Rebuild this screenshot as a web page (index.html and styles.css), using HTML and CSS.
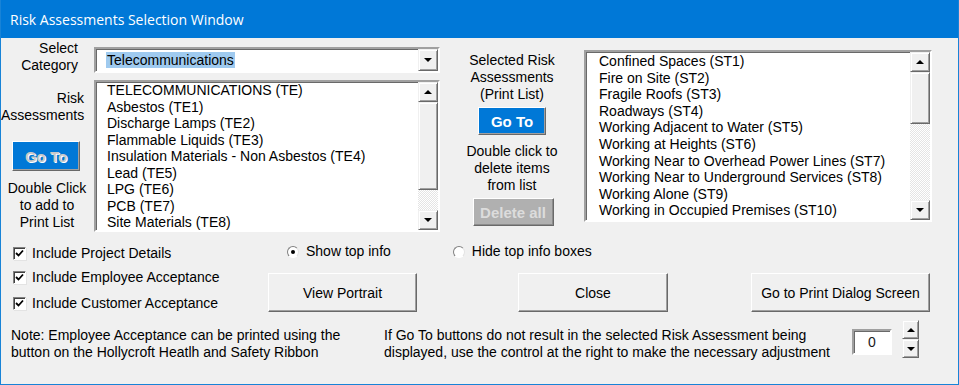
FILE: index.html
```html
<!DOCTYPE html>
<html lang="en">
<head>
  <meta charset="UTF-8">
  <title>Risk Assessments Selection Window</title>
  <link rel="stylesheet" href="styles.css">
</head>
<body>
  <div class="window">
    <div class="titlebar">Risk Assessments Selection Window</div>

    <div class="content">
      <!-- Top area: category picker, lists and middle controls -->
      <div class="top">
        <div class="side">
          <div class="lbl lbl-cat">Select<br>Category</div>
          <div class="lbl lbl-risk">Risk<br>Assessments</div>
          <button class="btn-blue btn-left">Go To</button>
          <div class="hint">Double Click<br>to add to<br>Print List</div>
        </div>

        <div class="picker">
          <div class="combo">
            <span class="combo-text"><span class="sel">Telecommunications</span></span>
            <span class="sbtn"><span class="arrow-down"></span></span>
          </div>
          <div class="listbox list-left">
            <ul class="items">
              <li>TELECOMMUNICATIONS (TE)</li>
              <li>Asbestos (TE1)</li>
              <li>Discharge Lamps (TE2)</li>
              <li>Flammable Liquids (TE3)</li>
              <li>Insulation Materials - Non Asbestos (TE4)</li>
              <li>Lead (TE5)</li>
              <li>LPG (TE6)</li>
              <li>PCB (TE7)</li>
              <li>Site Materials (TE8)</li>
            </ul>
            <div class="scrollbar">
              <span class="sbtn"><span class="arrow-up"></span></span>
              <span class="thumb thumb-left"></span>
              <span class="track"></span>
              <span class="sbtn"><span class="arrow-down"></span></span>
            </div>
          </div>
        </div>

        <div class="middle">
          <div class="mtext">Selected Risk<br>Assessments<br>(Print List)</div>
          <button class="btn-blue btn-mid">Go To</button>
          <div class="mtext mtext-2">Double click to<br>delete items<br>from list</div>
          <button class="btn-grey">Delete all</button>
        </div>

        <div class="listbox list-right">
          <ul class="items">
            <li>Confined Spaces (ST1)</li>
            <li>Fire on Site (ST2)</li>
            <li>Fragile Roofs (ST3)</li>
            <li>Roadways (ST4)</li>
            <li>Working Adjacent to Water (ST5)</li>
            <li>Working at Heights (ST6)</li>
            <li>Working Near to Overhead Power Lines (ST7)</li>
            <li>Working Near to Underground Services (ST8)</li>
            <li>Working Alone (ST9)</li>
            <li>Working in Occupied Premises (ST10)</li>
          </ul>
          <div class="scrollbar">
            <span class="sbtn"><span class="arrow-up"></span></span>
            <span class="thumb thumb-right"></span>
            <span class="track"></span>
            <span class="sbtn"><span class="arrow-down"></span></span>
          </div>
        </div>
      </div>

      <!-- Options and main buttons -->
      <div class="options">
        <div class="checks">
          <label class="check"><span class="box"><svg width="9" height="9" viewBox="0 0 9 9"><path d="M1 4 L3.5 6.5 L8 1.5" fill="none" stroke="#000" stroke-width="1.8"/></svg></span>Include Project Details</label>
          <label class="check check-2"><span class="box"><svg width="9" height="9" viewBox="0 0 9 9"><path d="M1 4 L3.5 6.5 L8 1.5" fill="none" stroke="#000" stroke-width="1.8"/></svg></span>Include Employee Acceptance</label>
          <label class="check check-3"><span class="box"><svg width="9" height="9" viewBox="0 0 9 9"><path d="M1 4 L3.5 6.5 L8 1.5" fill="none" stroke="#000" stroke-width="1.8"/></svg></span>Include Customer Acceptance</label>
        </div>
        <div class="actions">
          <div class="radios">
            <label class="radio radio-show"><span class="dot on"></span>Show top info</label>
            <label class="radio radio-hide"><span class="dot"></span>Hide top info boxes</label>
          </div>
          <div class="buttons">
            <button class="btn btn-portrait">View Portrait</button>
            <button class="btn btn-close">Close</button>
            <button class="btn btn-print">Go to Print Dialog Screen</button>
          </div>
        </div>
      </div>

      <!-- Notes and offset spinner -->
      <div class="notes">
        <p class="note-left">Note: Employee Acceptance can be printed using the<br>button on the Hollycroft Heatlh and Safety Ribbon</p>
        <p class="note-right">If Go To buttons do not result in the selected Risk Assessment being<br>displayed, use the control at the right to make the necessary adjustment</p>
        <div class="spin-box">0</div>
        <div class="spin-btns">
          <span class="sbtn"><span class="arrow-up"></span></span>
          <span class="sbtn"><span class="arrow-down"></span></span>
        </div>
      </div>
    </div>
  </div>
</body>
</html>
```

FILE: styles.css
```css
/* Global */
body {
  margin: 0;
  background-color: #f0f0f0;
  font-family: 'Liberation Sans', Arial, sans-serif;
  font-size: 14px;
  color: #000;
}

.window {
  width: 959px;
  height: 385px;
  box-sizing: border-box;
  border: 1px solid #1883d7;
  border-top: none;
  background-color: #f0f0f0;
  overflow: hidden;
}

.titlebar {
  height: 38px;
  background-color: #0078d7;
  color: #fff;
  font-family: 'Open Sans', sans-serif;
  font-size: 14px;
  line-height: 40px;
  padding-left: 10px;
  margin: 0 -1px;
}

.content {
  line-height: 17px;
}

/* Top area */
.top {
  display: flex;
  height: 196px;
}

.side {
  width: 93px;
  display: flex;
  flex-direction: column;
}

.lbl {
  text-align: right;
}

.lbl-cat {
  margin-top: 2px;
  padding-right: 16px;
}

.lbl-risk {
  margin-top: 16px;
  padding-right: 10px;
}

.hint {
  margin-top: 9px;
  text-align: center;
  width: 92px;
}

/* Blue Go To buttons */
button {
  font-family: inherit;
  padding: 0;
  cursor: pointer;
}

.btn-blue {
  width: 68px;
  background-color: #0078d7;
  border: 1px solid;
  border-color: #fff #696969 #696969 #fff;
  box-shadow: inset -1px -1px #a0a0a0;
  font-weight: bold;
  font-size: 15px;
}

.btn-left {
  height: 30px;
  margin: 17px 0 0 11px;
  color: #c8c8c8;
  text-shadow: 1px 1px #fff;
}

.btn-mid {
  height: 28px;
  color: #fff;
  margin-top: 4px;
}

.btn-grey {
  width: 81px;
  height: 28px;
  margin-top: 4px;
  margin-left: 2px;
  background-color: #b0b0b0;
  border: 1px solid;
  border-color: #fff #696969 #696969 #fff;
  box-shadow: inset -1px -1px #8c8c8c;
  color: #dcdcdc;
  font-weight: bold;
  font-size: 15px;
}

/* Category picker */
.picker {
  width: 346px;
  display: flex;
  flex-direction: column;
}

.combo {
  margin-top: 9px;
  height: 26px;
  box-sizing: border-box;
  background-color: #fff;
  border: 2px solid;
  border-color: #a0a0a0 #fff #fff #a0a0a0;
  box-shadow: inset 1px 1px #696969;
  display: flex;
  align-items: center;
  justify-content: space-between;
}

.combo-text {
  padding-left: 11px;
}

.sel {
  background-color: #9fcaef;
  padding: 0 1px;
  margin-left: -1px;
}

.combo .sbtn {
  height: 22px;
  margin-right: 0;
}

/* Listboxes */
.listbox {
  box-sizing: border-box;
  background-color: #fff;
  border: 2px solid;
  border-color: #a0a0a0 #fff #fff #a0a0a0;
  box-shadow: inset 1px 1px #696969;
  display: flex;
  justify-content: space-between;
}

.list-left {
  margin-top: 7px;
  height: 152px;
}

.list-right {
  margin-top: 12px;
  width: 348px;
  height: 172px;
}

.items {
  list-style: none;
  margin: 0;
  padding: 1px 0 0 11px;
  overflow: hidden;
  white-space: nowrap;
  line-height: 16.6px;
}

.list-left .items {
  padding-top: 0;
  line-height: 16.5px;
}

.list-right .items {
  padding-left: 13px;
}

.scrollbar {
  width: 20px;
  display: flex;
  flex-direction: column;
}

.sbtn {
  width: 20px;
  height: 20px;
  box-sizing: border-box;
  background-color: #f0f0f0;
  border: 1px solid;
  border-color: #f0f0f0 #696969 #696969 #f0f0f0;
  box-shadow: inset 1px 1px #fff, inset -1px -1px #a0a0a0;
  display: flex;
  align-items: center;
  justify-content: center;
  flex-shrink: 0;
}

.thumb {
  box-sizing: border-box;
  background-color: #f0f0f0;
  border: 1px solid;
  border-color: #f0f0f0 #696969 #696969 #f0f0f0;
  box-shadow: inset 1px 1px #fff, inset -1px -1px #a0a0a0;
}

.thumb-left {
  height: 88px;
}

.thumb-right {
  height: 52px;
}

.track {
  flex: 1;
  background-color: #f4f4f4;
  background-image: repeating-conic-gradient(#e4e4e4 0 25%, #fff 0 50%);
  background-size: 2px 2px;
}

.arrow-up,
.arrow-down {
  width: 0;
  height: 0;
  border-left: 4px solid transparent;
  border-right: 4px solid transparent;
}

.arrow-up {
  border-bottom: 4px solid #000;
}

.arrow-down {
  border-top: 4px solid #000;
}

/* Middle column */
.middle {
  width: 144px;
  display: flex;
  flex-direction: column;
  align-items: center;
  padding-top: 14px;
  box-sizing: border-box;
}

.mtext {
  text-align: center;
}

.mtext-2 {
  margin-top: 8px;
}

/* Options */
.options {
  display: flex;
  height: 87px;
}

.checks {
  width: 267px;
  display: flex;
  flex-direction: column;
  padding-left: 12px;
  box-sizing: border-box;
  margin-top: 11px;
}

.check {
  display: flex;
  align-items: center;
  gap: 6px;
}

.check-2 {
  margin-top: 7px;
}

.check-3 {
  margin-top: 9px;
}

.box {
  width: 13px;
  height: 13px;
  box-sizing: border-box;
  background-color: #fff;
  border: 1px solid;
  border-color: #808080 #fff #fff #808080;
  box-shadow: inset 1px 1px #404040, 1px 1px #e3e3e3;
  display: flex;
  align-items: center;
  justify-content: center;
}

.actions {
  display: flex;
  flex-direction: column;
}

.radios {
  display: flex;
  margin-top: 9px;
  padding-left: 19px;
}

.radio {
  display: flex;
  align-items: center;
  gap: 7px;
}

.radio-hide {
  margin-left: 62px;
}

.dot {
  width: 12px;
  height: 12px;
  box-sizing: border-box;
  border-radius: 50%;
  background-color: #fff;
  border: 1px solid;
  border-color: #808080 #e3e3e3 #fff #808080;
  display: flex;
  align-items: center;
  justify-content: center;
}

.dot.on::after {
  content: "";
  width: 4px;
  height: 4px;
  border-radius: 50%;
  background-color: #000;
}

.buttons {
  display: flex;
  margin-top: 13px;
}

.btn {
  height: 39px;
  background-color: #f0f0f0;
  border: 1px solid;
  border-color: #fff #696969 #696969 #fff;
  box-shadow: inset -1px -1px #a0a0a0;
  font-size: 14px;
  color: #000;
}

.btn-portrait {
  width: 149px;
}

.btn-close {
  width: 150px;
  margin-left: 101px;
}

.btn-print {
  width: 179px;
  margin-left: 83px;
}

/* Notes */
.notes {
  display: flex;
  align-items: flex-start;
}

.notes p {
  margin: 0;
}

.note-left {
  width: 373px;
  padding-left: 10px;
  margin-top: 6px !important;
}

.note-right {
  width: 468px;
  margin-top: 6px !important;
}

.spin-box {
  width: 40px;
  height: 26px;
  margin-top: 8px;
  box-sizing: border-box;
  background-color: #fff;
  border: 2px solid;
  border-color: #a0a0a0 #fff #fff #a0a0a0;
  box-shadow: inset 1px 1px #696969;
  text-align: center;
  line-height: 22px;
  color: #1a1a1a;
}

.spin-btns {
  display: flex;
  flex-direction: column;
  margin-left: 10px;
  margin-top: -1px;
}

.spin-btns .sbtn {
  width: 17px;
  height: 19px;
}
```
